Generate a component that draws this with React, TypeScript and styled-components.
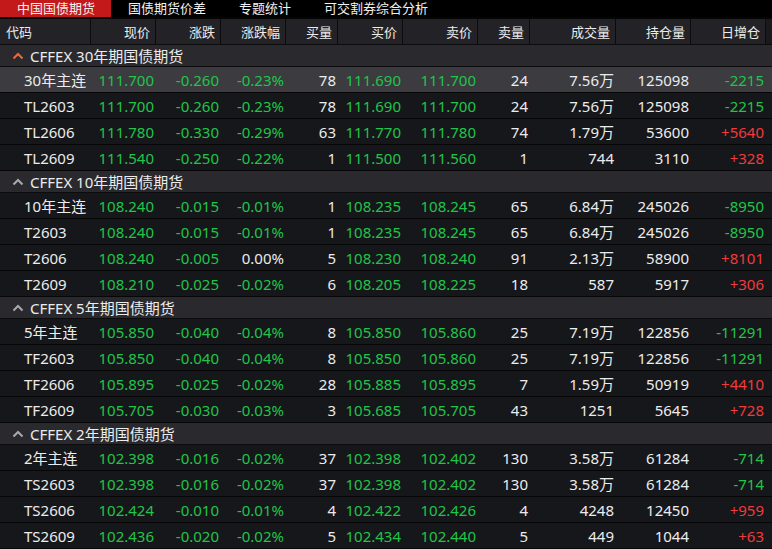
import React from "react";
import styled, { createGlobalStyle } from "styled-components";

type Tone = "up" | "down" | "flat";

interface Quote {
  code: string;
  price: string;
  change: string;
  pct: string;
  bidVol: string;
  bid: string;
  ask: string;
  askVol: string;
  volume: string;
  oi: string;
  oiChange: string;
}

interface Group {
  title: string;
  rows: Quote[];
}

const q = (line: string): Quote => {
  const [code, price, change, pct, bidVol, bid, ask, askVol, volume, oi, oiChange] =
    line.split(" ");
  return { code, price, change, pct, bidVol, bid, ask, askVol, volume, oi, oiChange };
};

const groups: Group[] = [
  {
    title: "CFFEX 30年期国债期货",
    rows: [
      q("30年主连 111.700 -0.260 -0.23% 78 111.690 111.700 24 7.56万 125098 -2215"),
      q("TL2603 111.700 -0.260 -0.23% 78 111.690 111.700 24 7.56万 125098 -2215"),
      q("TL2606 111.780 -0.330 -0.29% 63 111.770 111.780 74 1.79万 53600 +5640"),
      q("TL2609 111.540 -0.250 -0.22% 1 111.500 111.560 1 744 3110 +328"),
    ],
  },
  {
    title: "CFFEX 10年期国债期货",
    rows: [
      q("10年主连 108.240 -0.015 -0.01% 1 108.235 108.245 65 6.84万 245026 -8950"),
      q("T2603 108.240 -0.015 -0.01% 1 108.235 108.245 65 6.84万 245026 -8950"),
      q("T2606 108.240 -0.005 0.00% 5 108.230 108.240 91 2.13万 58900 +8101"),
      q("T2609 108.210 -0.025 -0.02% 6 108.205 108.225 18 587 5917 +306"),
    ],
  },
  {
    title: "CFFEX 5年期国债期货",
    rows: [
      q("5年主连 105.850 -0.040 -0.04% 8 105.850 105.860 25 7.19万 122856 -11291"),
      q("TF2603 105.850 -0.040 -0.04% 8 105.850 105.860 25 7.19万 122856 -11291"),
      q("TF2606 105.895 -0.025 -0.02% 28 105.885 105.895 7 1.59万 50919 +4410"),
      q("TF2609 105.705 -0.030 -0.03% 3 105.685 105.705 43 1251 5645 +728"),
    ],
  },
  {
    title: "CFFEX 2年期国债期货",
    rows: [
      q("2年主连 102.398 -0.016 -0.02% 37 102.398 102.402 130 3.58万 61284 -714"),
      q("TS2603 102.398 -0.016 -0.02% 37 102.398 102.402 130 3.58万 61284 -714"),
      q("TS2606 102.424 -0.010 -0.01% 4 102.422 102.426 4 4248 12450 +959"),
      q("TS2609 102.436 -0.020 -0.02% 5 102.434 102.440 5 449 1044 +63"),
    ],
  },
];

const tabs = ["中国国债期货", "国债期货价差", "专题统计", "可交割券综合分析"];
const headers = ["代码", "现价", "涨跌", "涨跌幅", "买量", "买价", "卖价", "卖量", "成交量", "持仓量", "日增仓"];

const COLS = "91px 65px 65px 65px 52px 65px 75px 52px 86px 75px 75px 1fr";

const toneOf = (v: string): Tone => {
  if (v.startsWith("-")) return "down";
  if (v.startsWith("+")) return "up";
  return "flat";
};

// prices are all below the previous settle here, so they show green
const priceTone = (change: string): Tone => (change.startsWith("+") ? "up" : "down");

const toneColor: Record<Tone, string> = {
  up: "#f23a3a",
  down: "#20c548",
  flat: "#ececec",
};

const GlobalStyle = createGlobalStyle`
  html, body {
    margin: 0;
    padding: 0;
    background: #131417;
    overflow: hidden;
  }
  body {
    font-family: "Noto Sans", "Noto Sans CJK SC", sans-serif;
  }
`;

const Page = styled.div`
  width: 772px;
  height: 549px;
  overflow: hidden;
  background: #16171b;
`;

const TabBar = styled.div`
  display: flex;
  height: 17px;
  background: #000;
  border-bottom: 2px solid #050505;
`;

const Tab = styled.div<{ $active?: boolean }>`
  display: flex;
  align-items: center;
  padding: 0 16px 0 17px;
  font-size: 13px;
  line-height: 17px;
  color: #f2f2f2;
  background: ${(p) => (p.$active ? "#c3191b" : "transparent")};
  white-space: nowrap;
`;

const HeaderRow = styled.div`
  display: grid;
  grid-template-columns: ${COLS};
  height: 25px;
  background: #232327;
  border-bottom: 1px solid #0c0c0e;
`;

const HeaderCell = styled.div<{ $left?: boolean }>`
  display: flex;
  align-items: center;
  justify-content: ${(p) => (p.$left ? "flex-start" : "flex-end")};
  padding: ${(p) => (p.$left ? "0 0 0 6px" : "0 5px 0 0")};
  border-right: 1px solid #0c0c0e;
  font-size: 13px;
  color: #ececec;
  &:last-child {
    border-right: none;
    background: #1a1a1d;
  }
`;

const GroupHeader = styled.div`
  display: flex;
  align-items: center;
  gap: 6px;
  height: 21px;
  padding-left: 12px;
  background: #2a2a2e;
  border-bottom: 1px solid #0c0c0e;
  font-size: 15px;
  color: #ececec;
`;

const Chevron = styled.svg<{ $open?: boolean }>`
  width: 12px;
  height: 8px;
  flex: none;
  color: ${(p) => (p.$open ? "#ee6a3c" : "#a9a9ad")};
`;

const Row = styled.div<{ $active?: boolean }>`
  display: grid;
  grid-template-columns: ${COLS};
  height: 25px;
  background: ${(p) => (p.$active ? "#3b3b40" : "#16171b")};
  border-bottom: 1px solid #060607;
`;

const Cell = styled.div<{ $tone?: Tone; $code?: boolean }>`
  display: flex;
  align-items: center;
  justify-content: ${(p) => (p.$code ? "flex-start" : "flex-end")};
  padding: ${(p) => (p.$code ? "0 0 0 24px" : "0 2px 0 0")};
  font-size: 15px;
  color: ${(p) => toneColor[p.$tone ?? "flat"]};
  white-space: nowrap;
`;

const ChevronIcon: React.FC<{ open?: boolean }> = ({ open }) => (
  <Chevron $open={open} viewBox="0 0 12 8">
    <polyline
      points="1.5,6.5 6,2 10.5,6.5"
      fill="none"
      stroke="currentColor"
      strokeWidth="2"
    />
  </Chevron>
);

const QuoteRow: React.FC<{ row: Quote; active?: boolean }> = ({ row, active }) => {
  const pt = priceTone(row.change);
  return (
    <Row $active={active}>
      <Cell $code>{row.code}</Cell>
      <Cell $tone={pt}>{row.price}</Cell>
      <Cell $tone={toneOf(row.change)}>{row.change}</Cell>
      <Cell $tone={toneOf(row.pct)}>{row.pct}</Cell>
      <Cell>{row.bidVol}</Cell>
      <Cell $tone={pt}>{row.bid}</Cell>
      <Cell $tone={pt}>{row.ask}</Cell>
      <Cell>{row.askVol}</Cell>
      <Cell>{row.volume}</Cell>
      <Cell>{row.oi}</Cell>
      <Cell $tone={toneOf(row.oiChange)}>{row.oiChange}</Cell>
      <Cell />
    </Row>
  );
};

export default function App() {
  return (
    <Page>
      <GlobalStyle />
      <TabBar>
        {tabs.map((t, i) => (
          <Tab key={t} $active={i === 0}>
            {t}
          </Tab>
        ))}
      </TabBar>
      <HeaderRow>
        {headers.map((h, i) => (
          <HeaderCell key={h} $left={i === 0}>
            {h}
          </HeaderCell>
        ))}
        <HeaderCell />
      </HeaderRow>
      {groups.map((g, gi) => (
        <React.Fragment key={g.title}>
          <GroupHeader>
            <ChevronIcon open={gi === 0} />
            {g.title}
          </GroupHeader>
          {g.rows.map((r, ri) => (
            <QuoteRow key={r.code} row={r} active={gi === 0 && ri === 0} />
          ))}
        </React.Fragment>
      ))}
    </Page>
  );
}
